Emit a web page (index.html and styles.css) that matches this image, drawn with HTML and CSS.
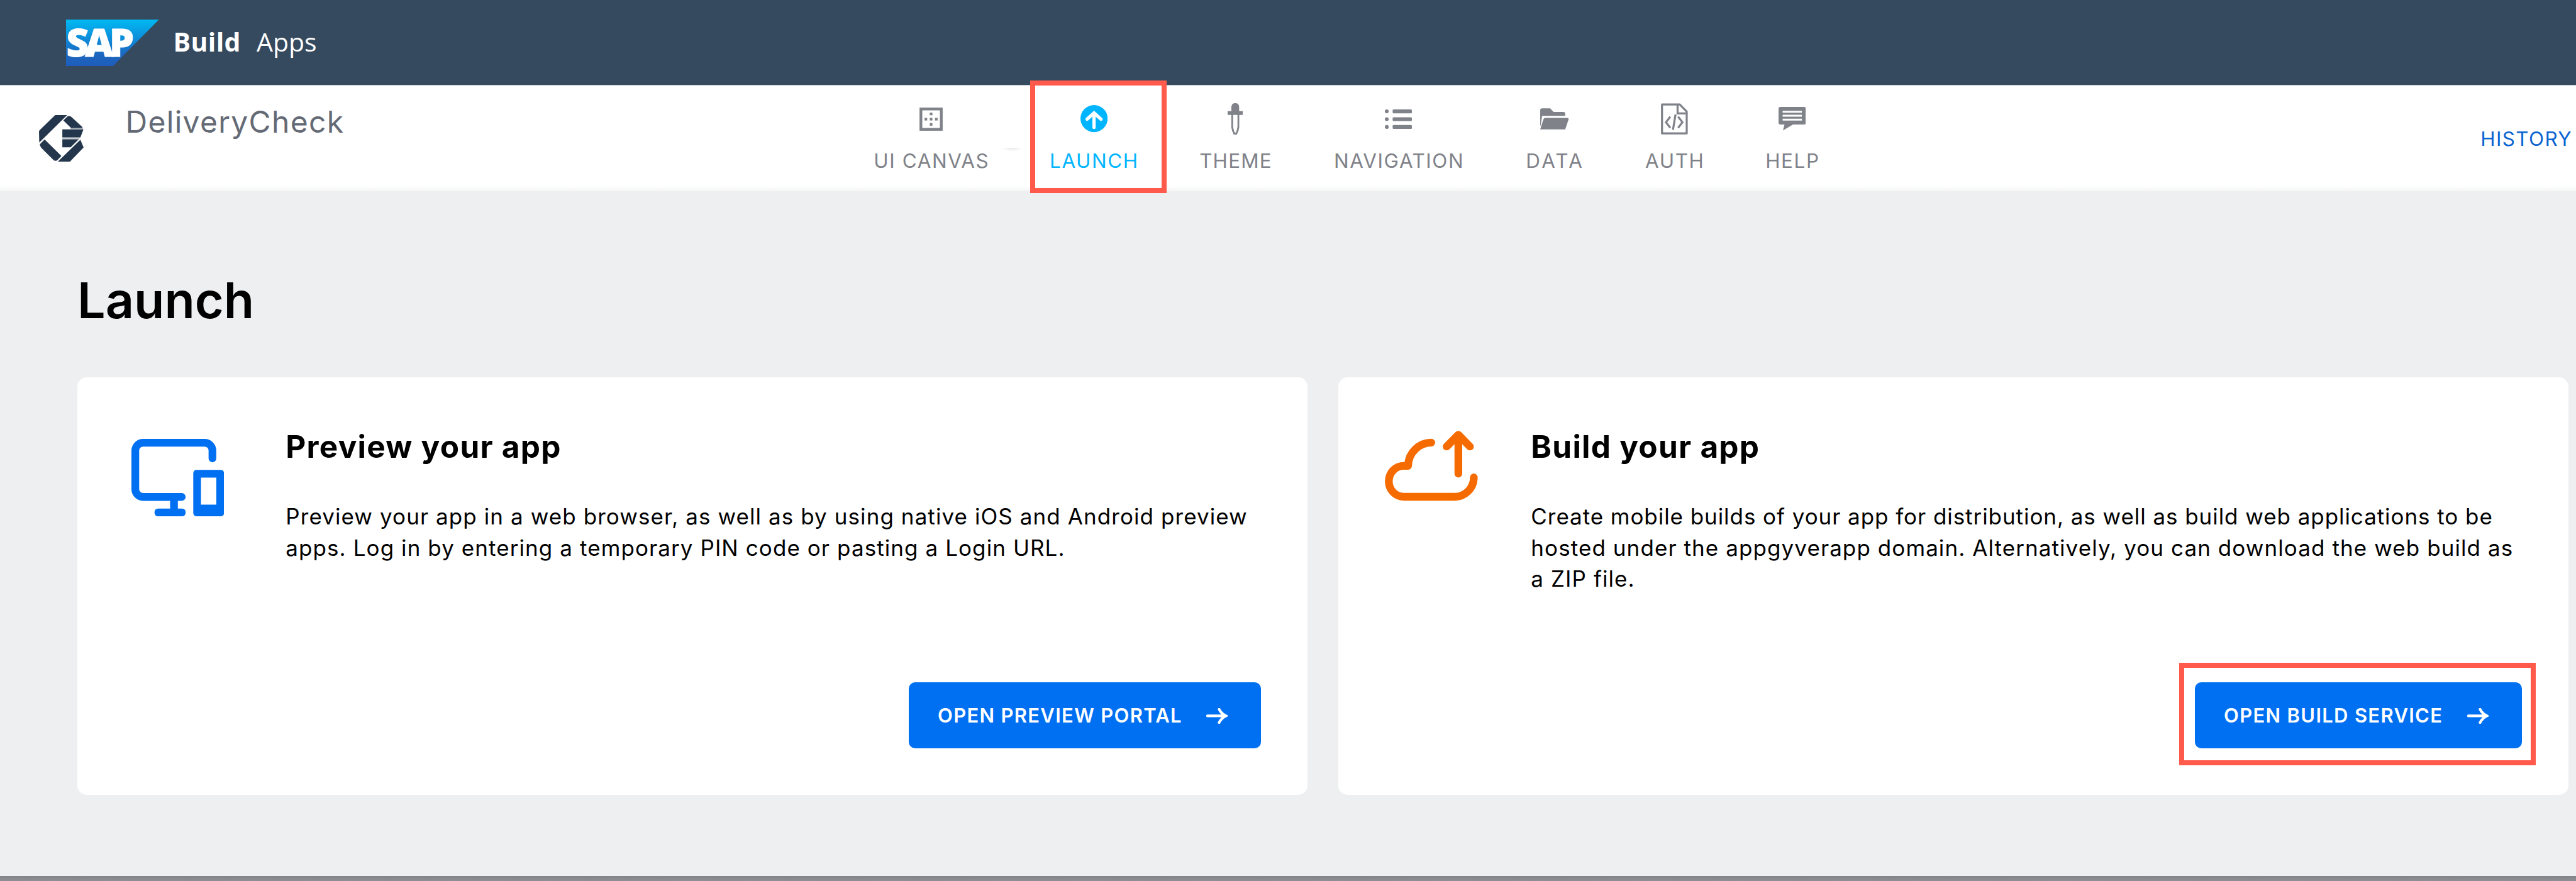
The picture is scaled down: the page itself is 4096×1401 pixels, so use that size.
FILE: index.html
```html
<!DOCTYPE html>
<html lang="en">
<head>
<meta charset="utf-8">
<title>SAP Build Apps</title>
<link rel="stylesheet" href="styles.css">
</head>
<body>
<header class="shell">
  <svg class="sap" viewBox="0 0 148 74">
    <defs><linearGradient id="sapfill" x1="0" y1="0" x2="0" y2="1"><stop offset="0" stop-color="#00b9f2"/><stop offset=".5" stop-color="#1182d4"/><stop offset=".75" stop-color="#1c67c0"/><stop offset="1" stop-color="#1e5dbb"/></linearGradient></defs>
    <path d="M0 0H148L75 74H0Z" fill="url(#sapfill)"/>
    <text class="sap-word" x="0.5" y="59" textLength="108" lengthAdjust="spacing">SAP</text>
  </svg>
  <span class="product">Build</span>
  <span class="product-sub">Apps</span>
</header>

<div class="toolbar">
  <svg class="app-logo" viewBox="90 950 415 433" fill="#24364c">
    <path fill="#a9afb8" d="M388 1068H495L503 1084H307V1080H380Z"/>
    <path fill="#c6cad0" d="M307 1158H475L462 1176H307Z"/>
    <path d="M240 950H352L92 1206L90 1100Q92 1094 100 1086Z"/>
    <path d="M356 961Q372 954 388 964L495 1062L490 1070H388L316 1000Z"/>
    <path d="M307 1085H503L475 1158H307Z"/>
    <path d="M307 1176H460L384 1250H307Z"/>
    <path d="M475 1180L505 1252L378 1383H265Z"/>
    <path d="M142 1177L298 1330L262 1368Q245 1382 225 1368L112 1256Q98 1240 97 1222Z"/>
  </svg>
  <div class="app-name">DeliveryCheck</div>
  <nav class="nav">
    <a class="item"><span class="icon"><svg width="37" height="37" viewBox="0 0 37 37" fill="#7f8289"><rect x="2.3" y="2.3" width="32.4" height="32.4" fill="none" stroke="#7f8289" stroke-width="4.4"/><rect x="16.4" y="16.4" width="4.2" height="4.2"/><rect x="8.1" y="16.4" width="4.2" height="4.2"/><rect x="24.7" y="16.4" width="4.2" height="4.2"/><rect x="16.4" y="8.1" width="4.2" height="4.2"/><rect x="16.4" y="24.7" width="4.2" height="4.2"/></svg></span><span class="label">UI CANVAS</span></a>
    <a class="item active"><span class="icon"><svg width="43.2" height="43.2" viewBox="0 0 43.2 43.2"><circle cx="21.6" cy="21.6" r="21.6" fill="#00b5ff"/><path d="M21.6 35.5V13M10.6 22.5L21.6 12.6L32.6 22.5" fill="none" stroke="#fff" stroke-width="5.2" stroke-linecap="round"/></svg></span><span class="label">LAUNCH</span></a>
    <a class="item theme"><span class="icon"><svg width="24.4" height="50" viewBox="0 0 24.4 50" fill="#7f8289"><path d="M6 12.8V6Q6.500 0 12.200 0Q18 0 18.300 6V12.800H24.400V18.800H0V12.800Z"/><path d="M7.300 18V38Q7.800 43 10.600 48.500H13.800Q16.600 43 17.100 38V18" fill="none" stroke="#7f8289" stroke-width="2.8"/></svg></span><span class="label">THEME</span></a>
    <a class="item"><span class="icon"><svg width="43" height="31" viewBox="0 0 43 31" fill="#7f8289"><circle cx="3" cy="3.100" r="3.100"/><circle cx="3" cy="15.500" r="3.100"/><circle cx="3" cy="27.900" r="3.100"/><rect x="12.400" width="30.600" height="6.200" rx="1.500"/><rect x="12.400" y="12.400" width="30.600" height="6.200" rx="1.500"/><rect x="12.400" y="24.800" width="30.600" height="6.200" rx="1.500"/></svg></span><span class="label">NAVIGATION</span></a>
    <a class="item data"><span class="icon"><svg width="46" height="34" viewBox="186 116 270 200" fill="#7f8289"><path d="M186 130Q188 117 203 117H276Q285 120 290 130L312 152H403Q420 154 420 172V188H204L190 275L186 285Z"/><path d="M186 315L215 222Q220 207 233 207H437Q455 208 451 222L420 315Z"/></svg></span><span class="label">DATA</span></a>
    <a class="item auth"><span class="icon"><svg width="42.700" height="50.200" viewBox="1300 56 250 294" fill="none" stroke="#7f8289" stroke-width="19"><path stroke-linejoin="round" d="M1310 68H1475L1540 135V338H1310Z"/><path d="M1455 68V152H1540M1387 182L1347 234L1387 286M1460 182L1500 234L1460 286M1436 162L1412 305"/></svg></span><span class="label">AUTH</span></a>
    <a class="item"><span class="icon"><svg width="43.700" height="37.400" viewBox="0 0 43.700 37.400"><path fill="#7f8289" d="M3 0H40.700Q43.700 0 43.700 3V25Q43.700 28 40.700 28H23L7 37.400L9.500 28H3Q0 28 0 25V3Q0 0 3 0Z"/><path d="M6.500 7.800H37.200M6.500 14H37.200M6.500 20.200H37.200" stroke="#fff" stroke-width="3.100"/></svg></span><span class="label">HELP</span></a>
  </nav>
  <i class="smudge"></i>
  <a class="history">HISTORY</a>
</div>

<main class="page">
  <h1>Launch</h1>
  <div class="cards">
    <section class="card preview">
      <svg class="art" width="147.300" height="123" viewBox="0 0 147.300 123" fill="#0070f2">
        <path d="M128.800 31V18.400A12.300 12.300 0 0 0 116.500 6.150H18.400A12.300 12.300 0 0 0 6.150 18.400V80A12.300 12.300 0 0 0 18.400 92.250H80" fill="none" stroke="#0070f2" stroke-width="12.300" stroke-linecap="round"/>
        <rect x="61.500" y="96" width="12.300" height="18"/>
        <rect x="36.700" y="110.700" width="49.400" height="12.300" rx="5.500"/>
        <path fill-rule="evenodd" d="M104 49.200H141.500Q147.300 49.200 147.300 55V117Q147.300 123 141.500 123H104Q98.300 123 98.300 117V55Q98.300 49.200 104 49.200ZM110.600 61.500V104.500H135V61.500Z"/>
      </svg>
      <div class="copy">
        <h2>Preview your app</h2>
        <p>Preview your app in a web browser, as well as by using native iOS and Android preview<br>apps. Log in by entering a temporary PIN code or pasting a Login URL.</p>
        <a class="btn"><span>OPEN PREVIEW PORTAL</span><svg class="arrow" viewBox="0 0 34 25"><path d="M2 12.400H31M20.500 2Q24 9 31.500 12.400Q24 16 20.500 23"/></svg></a>
      </div>
    </section>
    <section class="card build">
      <svg class="art" width="147.800" height="111.400" viewBox="78 51 865 651" fill="none" stroke="#f66b00" stroke-width="72" stroke-linecap="round" stroke-linejoin="round">
        <path d="M510 161C400 161 298 250 294 377H258C170 377 115 445 115 522C115 600 175 665 258 665H728C820 665 906 590 906 485"/>
        <path d="M762 450V90M653 198L762 88L870 198"/>
      </svg>
      <div class="copy">
        <h2>Build your app</h2>
        <p><span class="first">Create mobile builds of your app for distribution, as well as build web applications to be</span><br>hosted under the appgyverapp domain. Alternatively, you can download the web build as<br>a ZIP file.</p>
        <a class="btn marked"><span>OPEN BUILD SERVICE</span><svg class="arrow" viewBox="0 0 34 25"><path d="M2 12.400H31M20.500 2Q24 9 31.500 12.400Q24 16 20.500 23"/></svg></a>
      </div>
    </section>
  </div>
</main>
<footer class="edge"></footer>
</body>
</html>
```
FILE: styles.css
```css
*,*::after{box-sizing:border-box}
body{margin:0;width:4096px;height:1401px;overflow:hidden;display:flex;flex-direction:column;background:#eeeff1;font-family:Inter,"Liberation Sans",sans-serif;color:#000}
svg{display:block;flex:none}

.shell{flex:none;height:135px;background:#354a5f;display:flex;align-items:flex-start;padding:31px 0 0 105px;color:#fff;font-family:"Open Sans","Liberation Sans",sans-serif;font-size:41px;line-height:56px}
.sap{width:147.500px;height:74px;overflow:visible}
.sap-word{font:800 62px "Open Sans","Liberation Sans",sans-serif;fill:#fff;stroke:#fff;stroke-width:1px}
.product{margin:7px 0 0 23px;font-weight:700;letter-spacing:.4px}
.product-sub{margin:7px 0 0 25px}

.toolbar{flex:none;position:relative;height:169px;border-top:1px solid #b9bfc9;background:linear-gradient(#fff 0,#fff 159px,#f5f6f7 168px);display:flex;align-items:flex-start}
.app-logo{width:71px;height:74px;margin:47px 0 0 61.500px}
.app-name{width:1190px;margin:28.500px 0 0 67px;font-size:48px;line-height:58px;letter-spacing:1.300px;color:#646a75}
.nav{display:grid;grid-template-columns:178px 136px 111px 205px 88px 90px 81px;column-gap:101.600px;margin-left:2px;padding-top:27px}
.item{position:relative;display:flex;flex-direction:column;align-items:center;color:#7f8289;font-size:31.400px;line-height:40px;letter-spacing:1.600px}
.icon{height:52px;margin-bottom:21px;display:flex;align-items:center}
.label{white-space:nowrap;margin-right:-1.600px}
.active{color:#00b5ff}
.active::after{content:"";position:absolute;left:-33px;top:-35px;width:217px;height:178.500px;border:8px solid #ff5a4b;z-index:2}
.theme{letter-spacing:1.200px}
.data{letter-spacing:3.200px}
.smudge{position:absolute;left:1592px;top:99px;width:35px;height:6px;background:radial-gradient(ellipse at 50% 0,#e6e6e8,#fff 70%)}
.history{margin:65px 6px 0 auto;font-size:31.400px;line-height:40px;letter-spacing:1.400px;color:#0a64d1}

.page{flex:1;padding:124.700px 12.400px 0 123px}
h1{margin:0 0 75.300px;font-size:79px;line-height:96px;font-weight:600}
.cards{display:grid;grid-template-columns:1fr 1fr;gap:49.500px}
.card{height:664px;background:#fff;border-radius:15px;display:flex;padding:80.500px 73.500px 74px 86px}
.art{margin-top:17.500px}
.copy{flex:1;display:flex;flex-direction:column;margin-left:98px;white-space:nowrap}
.build{padding-left:74px}
.build .art{margin-top:5px}
.build .copy{margin-left:84.500px}
h2{margin:0 0 56.900px;font-size:49.500px;line-height:60px;font-weight:700;letter-spacing:1.250px}
p{margin:0;font-size:35px;line-height:49.200px;letter-spacing:1.080px}
.first{letter-spacing:.940px}
.btn{position:relative;width:560px;margin:auto 0 0 auto;height:104.500px;border-radius:10px;background:#0070f2;color:#fff;display:flex;align-items:center;justify-content:space-between;padding:1px 53.500px 0 46px;font-size:31px;line-height:40px;font-weight:600;letter-spacing:1.300px}
.arrow{width:34px;height:25px;fill:none;stroke:#fff;stroke-width:4.200;stroke-linecap:round}
.marked{width:520px}
.marked::after{content:"";position:absolute;left:-25px;right:-21.500px;top:-31px;bottom:-27.500px;border:8px solid #ff5a4b}
.edge{flex:none;height:8px;background:linear-gradient(#808287,#8e9095)}
```
